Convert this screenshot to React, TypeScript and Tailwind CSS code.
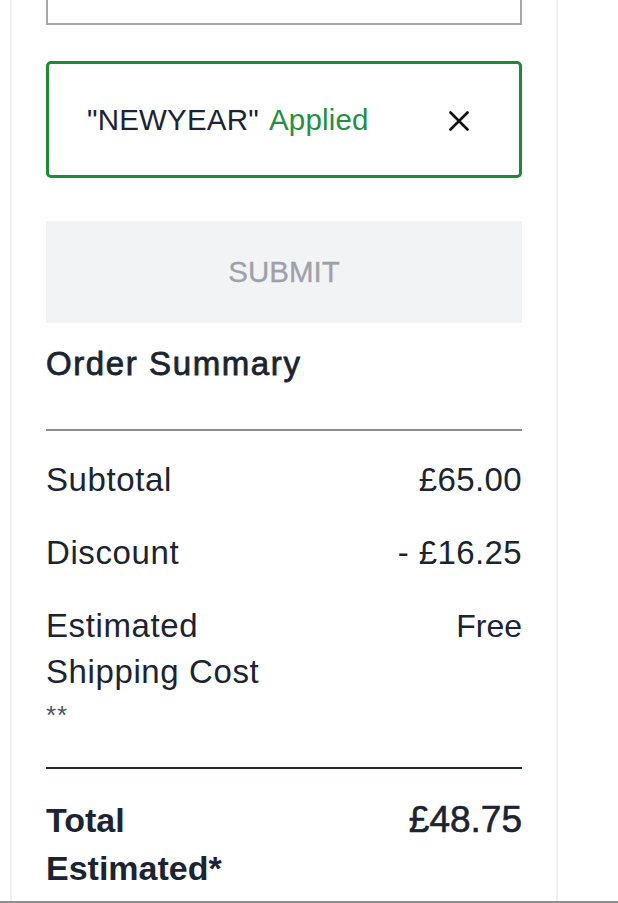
const rows = [
  { label: "Subtotal", value: "£65.00" },
  { label: "Discount", value: "- £16.25" },
];

const CloseIcon = () => (
  <svg width="20" height="20" viewBox="0 0 20 20" fill="none">
    <path
      d="M1.5 1.5L18.5 18.5M18.5 1.5L1.5 18.5"
      stroke="#111"
      strokeWidth="2.6"
      strokeLinecap="round"
    />
  </svg>
);

const App = () => {
  return (
    <div className="h-[903px] overflow-hidden bg-white border-b-2 border-[#8e8e8e] font-['Liberation_Sans',Arial,sans-serif] text-[#1a2433]">
      <div className="ml-[10px] w-[548px] h-full border-x-2 border-[#efefef] px-[34px]">
        {/* promo code input (cut off at top) */}
        <div className="h-[25px] border-2 border-t-0 border-[#a8a8a8]" />

        {/* applied code */}
        <div className="mt-[36px] h-[117px] border-[3px] border-[#1c8a38] rounded-[5px] flex items-center justify-between pl-[38px] pr-[50px]">
          <p className="text-[29.5px] leading-none tracking-[0.2px]">
            "NEWYEAR"<span className="ml-[10px] text-[#23903f]">Applied</span>
          </p>
          <button className="mt-[2px]">
            <CloseIcon />
          </button>
        </div>

        <button className="mt-[43px] w-full h-[102px] bg-[#f2f3f5] text-[#9da1a8] text-[29.5px] [-webkit-text-stroke:0.3px_#9da1a8]">
          SUBMIT
        </button>

        {/* Order Summary */}
        <h2 className="mt-[21px] text-[33px] leading-[40px] tracking-[1.6px] [-webkit-text-stroke:0.8px_#1a2433]">
          Order Summary
        </h2>
        <div className="mt-[45px] h-[2px] bg-[#8b8b8b]" />

        <div className="mt-[26px] flex flex-col gap-[27px] text-[33px] leading-[46px]">
          {rows.map((row) => (
            <div key={row.label} className="flex justify-between">
              <span className="tracking-[0.6px]">{row.label}</span>
              <span className="tracking-[0.4px]">{row.value}</span>
            </div>
          ))}
          <div className="flex justify-between items-start">
            <div className="tracking-[0.6px]">
              <div>Estimated</div>
              <div>Shipping Cost</div>
              <div className="text-[26px] leading-[34px] tracking-[1px] text-[#4b5563] pt-[3px]">**</div>
            </div>
            <span className="text-[32px]">Free</span>
          </div>
        </div>

        <div className="mt-[35px] h-[2px] bg-[#1f2937]" />

        <div className="mt-[27px] flex justify-between items-start">
          <div className="text-[34px] leading-[48px] font-bold">
            <div>Total</div>
            <div>Estimated*</div>
          </div>
          <span className="text-[37px] leading-[48px] [-webkit-text-stroke:0.6px_#1a2433]">
            £48.75
          </span>
        </div>
      </div>
    </div>
  );
};

export default App;
